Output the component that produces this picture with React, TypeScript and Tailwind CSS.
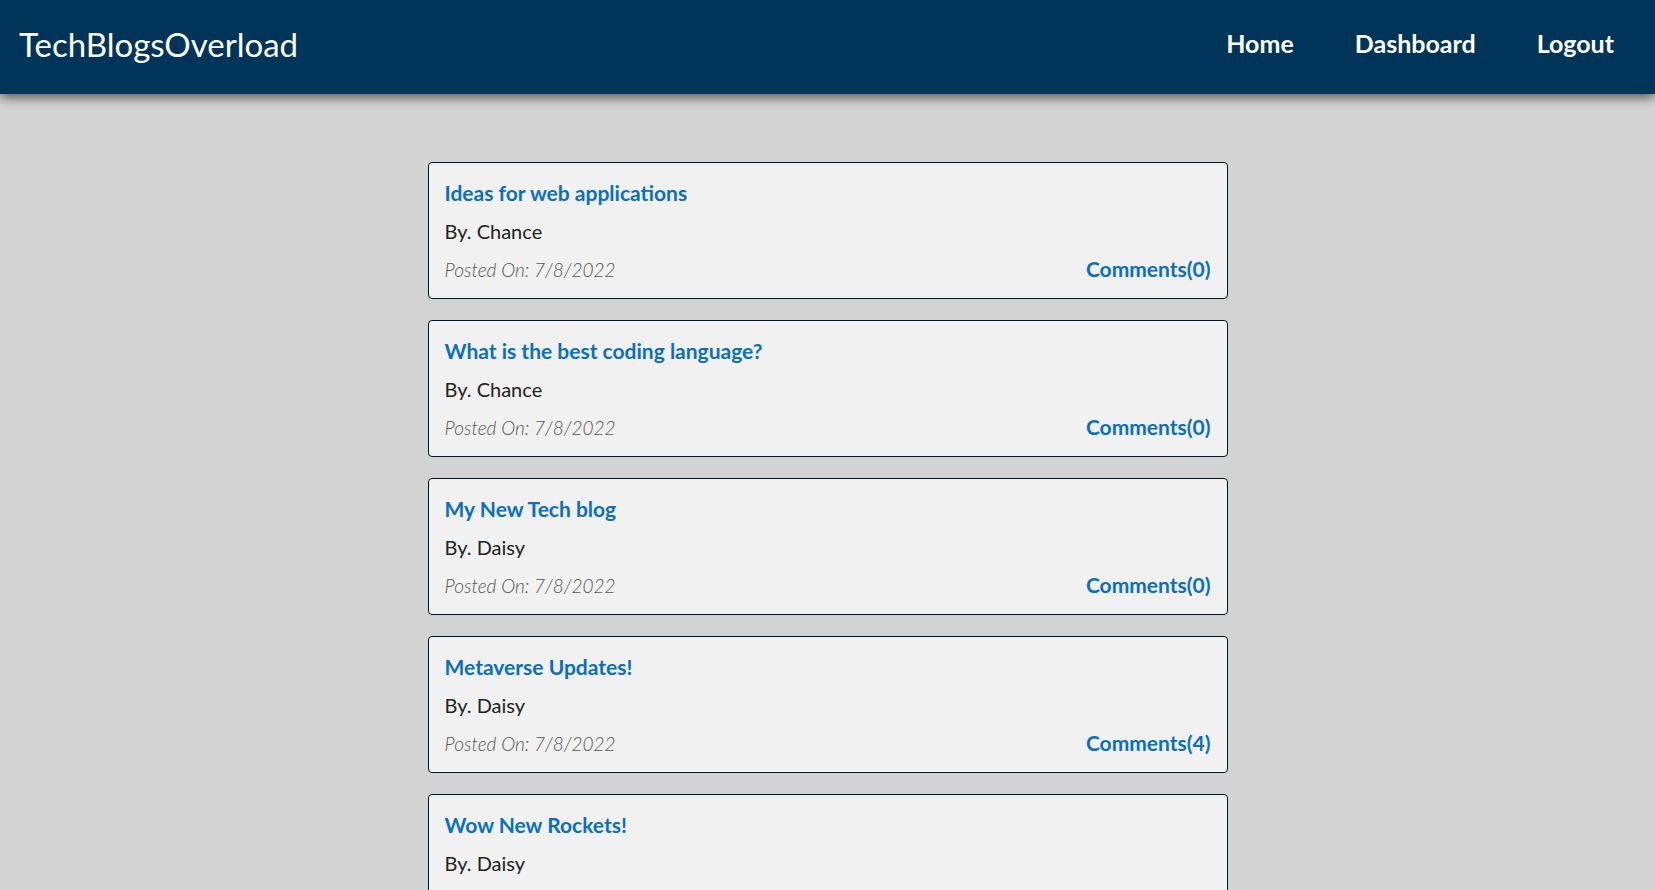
const posts = [
  { id: 1, title: "Ideas for web applications", author: "Chance", date: "7/8/2022", comments: 0 },
  { id: 2, title: "What is the best coding language?", author: "Chance", date: "7/8/2022", comments: 0 },
  { id: 3, title: "My New Tech blog", author: "Daisy", date: "7/8/2022", comments: 0 },
  { id: 4, title: "Metaverse Updates!", author: "Daisy", date: "7/8/2022", comments: 4 },
  { id: 5, title: "Wow New Rockets!", author: "Daisy", date: "7/8/2022", comments: 1 },
];

const App = () => {
  return (
    <div className="min-h-screen bg-[#d3d3d3] font-['Lato','Liberation_Sans',sans-serif]">
      <header className="relative z-10 h-[94px] bg-[#003459] flex items-center justify-between pl-[19px] pr-[41px] pb-[6px] shadow-[0_4px_10px_rgba(0,0,0,0.55)]">
        <a href="#" className="text-white text-[33px] leading-none">
          TechBlogsOverload
        </a>
        <nav className="flex items-center gap-[61px]">
          <a href="#" className="text-white font-bold text-[25px]">Home</a>
          <a href="#" className="text-white font-bold text-[25px]">Dashboard</a>
          <a href="#" className="text-white font-bold text-[25px]">Logout</a>
        </nav>
      </header>

      <main className="flex flex-col items-center gap-[21px] pt-[68px] pb-10">
        {posts.map(({ id, title, author, date, comments }) => (
          <div
            key={id}
            className="w-[800px] h-[137px] bg-[#f1f1f1] border border-[#00171f] rounded-[4px] px-4 pt-[11px] pb-[9px] text-[20px] leading-[38px]"
          >
            <a href="#" className="block font-bold text-[21px] text-[#0a6fbf]">
              {title}
            </a>
            <p className="text-[#222]">By. {author}</p>
            <div className="flex justify-between items-baseline">
              <span className="italic font-light text-[19px] text-[#555]">Posted On: {date}</span>
              <a href="#" className="font-bold text-[21px] text-[#0a6fbf]">
                Comments({comments})
              </a>
            </div>
          </div>
        ))}
      </main>
    </div>
  );
};

export default App;
